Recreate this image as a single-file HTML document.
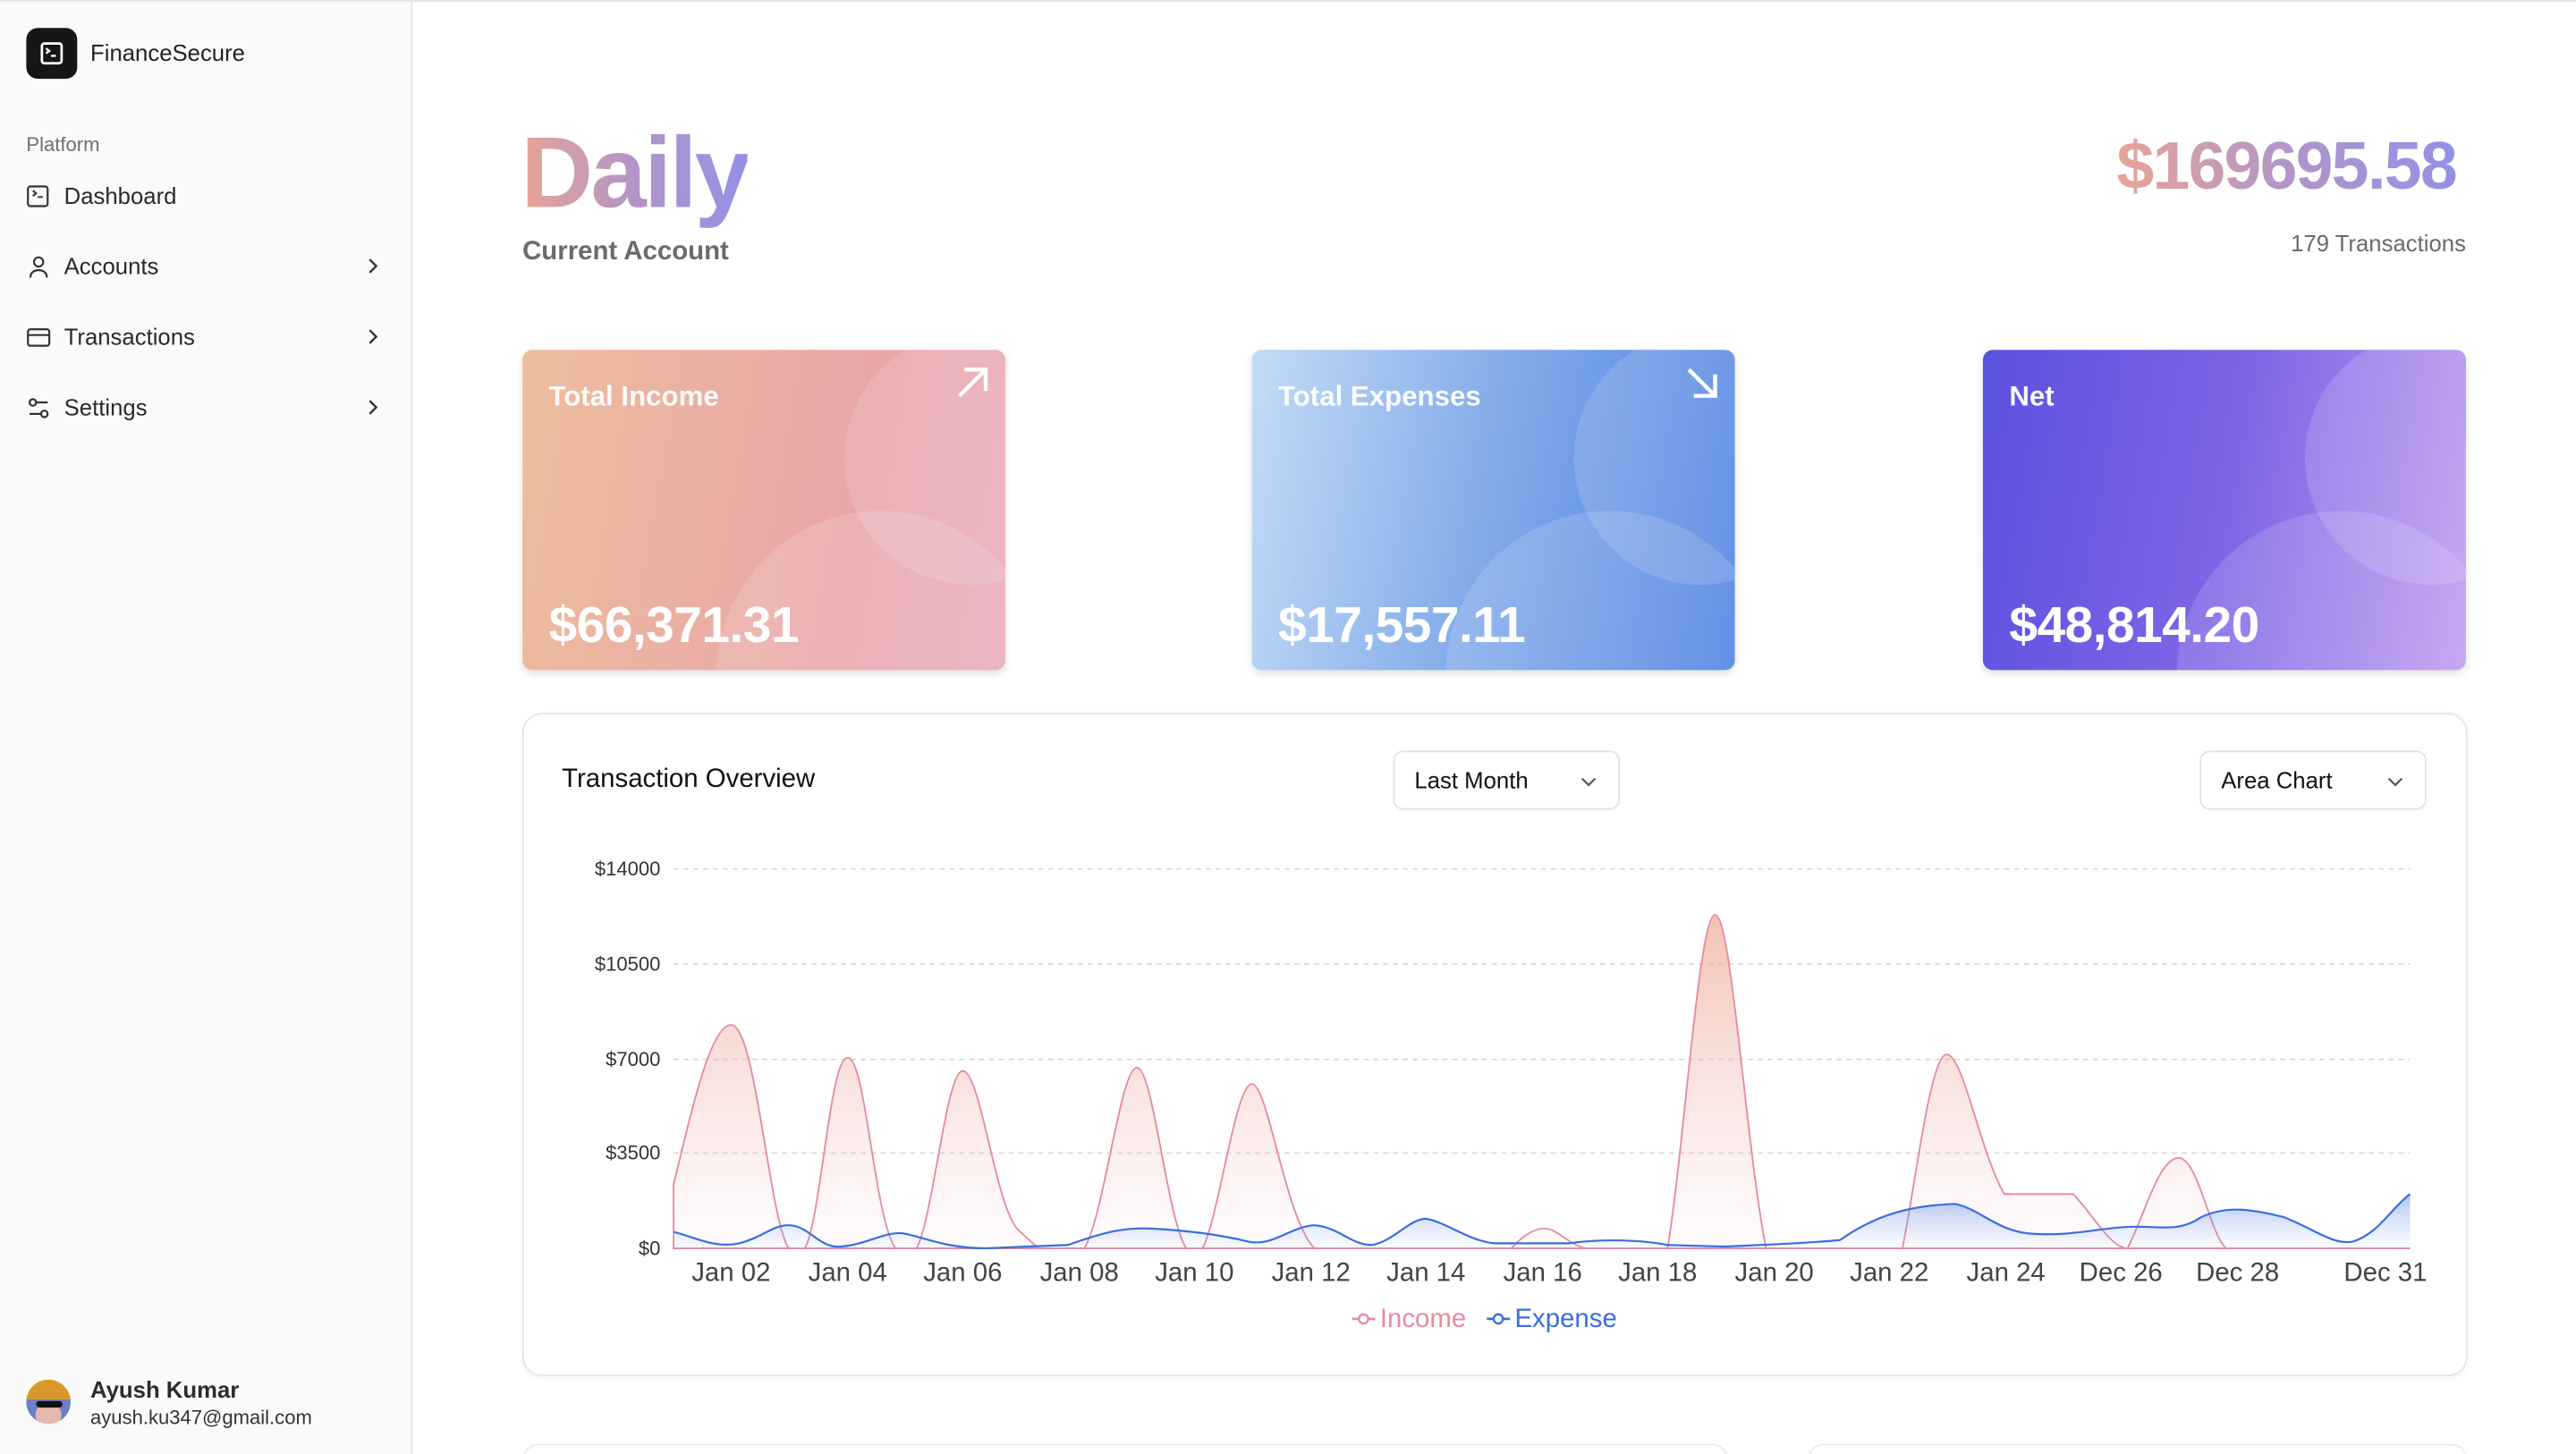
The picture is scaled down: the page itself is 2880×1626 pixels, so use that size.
<!DOCTYPE html>
<html><head><meta charset="utf-8"><style>
*{box-sizing:border-box;margin:0;padding:0}
html,body{width:2880px;height:1626px;overflow:hidden;background:#fff;font-family:"Liberation Sans",sans-serif}
#w{width:1568px;height:885px;transform:scale(1.836735);transform-origin:0 0;position:relative;border-top:1px solid #e4e4e4}
.sb{position:absolute;left:0;top:0;width:251px;height:885px;background:#fafafa;border-right:1px solid #e6e6e6}
.abs{position:absolute}
.nav{position:absolute;left:16px;font-size:14px;color:#2a2a2e;display:flex;align-items:center}
.nav svg{margin-right:8px}
.chev{position:absolute;left:221px}
.card{position:absolute;top:212px;width:294px;height:195px;border-radius:6px;overflow:hidden;box-shadow:0 2px 5px rgba(0,0,0,.12)}
.card .c1{position:absolute;left:196px;top:-11px;width:154px;height:154px;border-radius:50%;background:rgba(255,255,255,.14)}
.card .c2{position:absolute;left:118px;top:98px;width:200px;height:200px;border-radius:50%;background:rgba(255,255,255,.14)}
.card .t{position:absolute;left:16px;top:19px;color:#fff;font-weight:bold;font-size:17px;opacity:.95}
.card .v{position:absolute;left:16px;top:150px;color:#fff;font-weight:bold;font-size:31px;letter-spacing:-.3px}
.card svg{position:absolute;right:9px;top:9px}
.sel{position:absolute;top:456px;height:36px;border:1px solid #e3e3e3;border-radius:6px;font-size:14px;color:#111;padding:9px 12px;background:#fff}
.grad{background:linear-gradient(90deg,#e8a496,#b295c8,#9490e6);-webkit-background-clip:text;background-clip:text;color:transparent}
</style></head><body><div id="w">
<div class="sb">
 <div class="abs" style="left:16px;top:16px;width:31px;height:31px;background:#161616;border-radius:7px"></div>
 <svg class="abs" style="left:24px;top:24px" width="15" height="15" viewBox="0 0 15 15"><rect x="1.5" y="1.5" width="12" height="12" rx="1.5" fill="none" stroke="#fff" stroke-width="1.5"/><path d="M4 4.5l2 1.5-2 1.5M7 9h3" fill="none" stroke="#fff" stroke-width="1.3"/></svg>
 <div class="abs" style="left:55px;top:23px;font-size:14px;color:#222">FinanceSecure</div>
 <div class="abs" style="left:16px;top:80px;font-size:12px;color:#707070">Platform</div>
 <div class="nav" style="top:110px"><svg width="15" height="15" viewBox="0 0 15 15"><rect x="1" y="1.5" width="12" height="12" rx="1.5" fill="none" stroke="#333" stroke-width="1.2"/><path d="M4 4l2 1.7-2 1.7M7 8h3" fill="none" stroke="#333" stroke-width="1.1"/></svg>Dashboard</div>
 <div class="nav" style="top:153px"><svg width="15" height="15" viewBox="0 0 15 15"><circle cx="7.5" cy="4.5" r="2.8" fill="none" stroke="#333" stroke-width="1.2"/><path d="M2.5 14c0-3 2.2-4.5 5-4.5s5 1.5 5 4.5" fill="none" stroke="#333" stroke-width="1.2"/></svg>Accounts</div>
 <div class="nav" style="top:196px"><svg width="15" height="15" viewBox="0 0 15 15"><rect x="1" y="2.5" width="13" height="10" rx="1.5" fill="none" stroke="#333" stroke-width="1.2"/><path d="M1 6h13" stroke="#333" stroke-width="1.2"/></svg>Transactions</div>
 <div class="nav" style="top:239px"><svg width="15" height="15" viewBox="0 0 15 15"><circle cx="4" cy="4" r="2" fill="none" stroke="#333" stroke-width="1.2"/><circle cx="11" cy="11" r="2" fill="none" stroke="#333" stroke-width="1.2"/><path d="M6 4h7M2 11h7" stroke="#333" stroke-width="1.2"/></svg>Settings</div>
 <svg class="chev" style="top:155px" width="12" height="12" viewBox="0 0 12 12"><path d="M4 2l4 4-4 4" fill="none" stroke="#333" stroke-width="1.3"/></svg>
 <svg class="chev" style="top:198px" width="12" height="12" viewBox="0 0 12 12"><path d="M4 2l4 4-4 4" fill="none" stroke="#333" stroke-width="1.3"/></svg>
 <svg class="chev" style="top:241px" width="12" height="12" viewBox="0 0 12 12"><path d="M4 2l4 4-4 4" fill="none" stroke="#333" stroke-width="1.3"/></svg>
 <div class="abs" style="left:16px;top:839px;width:27px;height:27px;border-radius:50%;background:radial-gradient(circle at 50% 80%,#e4b8b0 30%,transparent 32%),linear-gradient(180deg,#d79a2a 0 45%,#6a7fc4 45%)"></div>
 <div class="abs" style="left:22px;top:852px;width:16px;height:4px;background:#111;border-radius:2px"></div>
 <div class="abs" style="left:55px;top:837px;font-size:14px;font-weight:bold;color:#2c2c30">Ayush Kumar</div>
 <div class="abs" style="left:55px;top:855px;font-size:12px;color:#333">ayush.ku347@gmail.com</div>
</div>

<div class="abs grad" style="left:317px;top:68px;font-size:61px;font-weight:bold;letter-spacing:-1.5px;line-height:72px">Daily</div>
<div class="abs" style="left:318px;top:144px;font-size:16px;font-weight:bold;color:#6b6b6b">Current Account</div>
<div class="abs grad" style="right:73px;top:76px;font-size:41px;font-weight:bold;letter-spacing:-1px;line-height:48px">$169695.58</div>
<div class="abs" style="right:67px;top:139px;font-size:14px;color:#6b6b6b">179 Transactions</div>

<div class="card" style="left:318px;background:linear-gradient(100deg,#edbd9c,#e8a6a8 65%,#e8a9b8)"><div class="c1"></div><div class="c2"></div><div class="t">Total Income</div><div class="v">$66,371.31</div><svg width="22" height="22" viewBox="0 0 22 22"><path d="M3 19L19 3M6 3h13v13" fill="none" stroke="#fff" stroke-width="2.4"/></svg></div>
<div class="card" style="left:762px;background:linear-gradient(100deg,#c3dcf6,#87aeea 45%,#4b7fe2)"><div class="c1"></div><div class="c2"></div><div class="t">Total Expenses</div><div class="v">$17,557.11</div><svg width="22" height="22" viewBox="0 0 22 22"><path d="M3 3l16 16M19 6v13H6" fill="none" stroke="#fff" stroke-width="2.4"/></svg></div>
<div class="card" style="left:1207px;background:linear-gradient(100deg,#5a52df,#7f64e6 50%,#bd9af0)"><div class="c1"></div><div class="c2"></div><div class="t">Net</div><div class="v">$48,814.20</div></div>

<div class="abs" style="left:318px;top:433px;width:1184px;height:404px;border:1px solid #e6e6e6;border-radius:12px;box-shadow:0 1px 3px rgba(0,0,0,.05)"></div>
<div class="abs" style="left:342px;top:465px;font-size:16px;color:#111">Transaction Overview</div>
<div class="sel" style="left:848px;width:138px">Last Month<svg class="abs" style="right:12px;top:12px" width="12" height="12" viewBox="0 0 12 12"><path d="M2 4l4 4 4-4" fill="none" stroke="#555" stroke-width="1.2"/></svg></div>
<div class="sel" style="left:1339px;width:138px">Area Chart<svg class="abs" style="right:12px;top:12px" width="12" height="12" viewBox="0 0 12 12"><path d="M2 4l4 4 4-4" fill="none" stroke="#555" stroke-width="1.2"/></svg></div>

<svg class="abs" style="left:0;top:0" width="1568" height="885" viewBox="0 0 1568 885" font-family="Liberation Sans, sans-serif">
<defs>
<linearGradient id="gi" x1="0" y1="0" x2="0" y2="1"><stop offset="0" stop-color="#eea98f" stop-opacity=".7"/><stop offset="1" stop-color="#f3c4cc" stop-opacity=".05"/></linearGradient>
<linearGradient id="ge" x1="0" y1="0" x2="0" y2="1"><stop offset="0" stop-color="#5b8ae6" stop-opacity=".5"/><stop offset="1" stop-color="#9bb8f0" stop-opacity=".05"/></linearGradient>
</defs>
<g stroke="#d8d8d8" stroke-dasharray="3 3" stroke-width="1">
<line x1="410" y1="528" x2="1467" y2="528"/><line x1="410" y1="586" x2="1467" y2="586"/><line x1="410" y1="644" x2="1467" y2="644"/><line x1="410" y1="701" x2="1467" y2="701"/>
</g>
<line x1="410" y1="759" x2="1467" y2="759" stroke="#888"/>
<g font-size="12" fill="#333" text-anchor="end"><text x="402" y="532">$14000</text><text x="402" y="590">$10500</text><text x="402" y="648">$7000</text><text x="402" y="705">$3500</text><text x="402" y="763">$0</text></g>
<path d="M410 759 L410 720 C420 680,432 623,445 623 C460 623,468 740,480 759 L490 759 C500 740,505 643,516 643 C527 643,532 740,545 759 L558 759 C568 740,576 651,586 651 C597 651,606 735,620 748 L632 759 L660 759 C672 740,682 649,692 649 C702 649,710 740,722 759 L732 759 C742 740,752 659,762 659 C772 659,782 740,800 759 L920 759 C928 750,935 747,940 747 C948 747,955 757,965 759 L1015 759 C1025 700,1034 556,1044 556 C1054 556,1063 700,1075 759 L1158 759 C1166 720,1175 641,1185 641 C1195 641,1205 700,1220 726 L1262 726 C1275 740,1285 759,1295 759 C1305 740,1314 704,1326 704 C1338 704,1345 750,1355 759 L1467 759 Z" fill="url(#gi)" stroke="#e58aa0" stroke-width="1"/>
<path d="M410 749 C425 753,435 759,450 756 C465 752,470 745,480 745 C492 745,498 758,510 758 C525 758,540 748,550 750 C562 752,575 759,600 759 L650 757 C665 752,680 746,700 747 C720 748,740 750,760 755 C775 758,785 746,800 745 C815 746,822 757,835 757 C848 755,858 741,868 741 C880 743,895 755,910 756 L955 756 C975 753,1000 754,1015 757 L1050 758 C1070 757,1100 756,1120 754 C1140 740,1160 733,1190 732 C1205 735,1215 748,1235 750 C1260 752,1275 747,1295 746 C1315 745,1325 750,1340 740 C1355 733,1370 735,1390 740 C1410 748,1420 757,1432 755 C1448 750,1455 735,1467 726 L1467 759 L410 759 Z" fill="url(#ge)" stroke="none"/>
<path d="M410 749 C425 753,435 759,450 756 C465 752,470 745,480 745 C492 745,498 758,510 758 C525 758,540 748,550 750 C562 752,575 759,600 759 L650 757 C665 752,680 746,700 747 C720 748,740 750,760 755 C775 758,785 746,800 745 C815 746,822 757,835 757 C848 755,858 741,868 741 C880 743,895 755,910 756 L955 756 C975 753,1000 754,1015 757 L1050 758 C1070 757,1100 756,1120 754 C1140 740,1160 733,1190 732 C1205 735,1215 748,1235 750 C1260 752,1275 747,1295 746 C1315 745,1325 750,1340 740 C1355 733,1370 735,1390 740 C1410 748,1420 757,1432 755 C1448 750,1455 735,1467 726" fill="none" stroke="#3a6ee0" stroke-width="1.2"/>
<g font-size="16" fill="#444" text-anchor="middle"><text x="445" y="779">Jan 02</text><text x="516" y="779">Jan 04</text><text x="586" y="779">Jan 06</text><text x="657" y="779">Jan 08</text><text x="727" y="779">Jan 10</text><text x="798" y="779">Jan 12</text><text x="868" y="779">Jan 14</text><text x="939" y="779">Jan 16</text><text x="1009" y="779">Jan 18</text><text x="1080" y="779">Jan 20</text><text x="1150" y="779">Jan 22</text><text x="1221" y="779">Jan 24</text><text x="1291" y="779">Dec 26</text><text x="1362" y="779">Dec 28</text><text x="1452" y="779">Dec 31</text></g>
<g font-size="16"><line x1="823" y1="802" x2="837" y2="802" stroke="#e58aa0" stroke-width="1.5"/><circle cx="830" cy="802" r="2.8" fill="#fff" stroke="#e58aa0" stroke-width="1.3"/><text x="840" y="807" fill="#e58aa0">Income</text>
<line x1="905" y1="802" x2="919" y2="802" stroke="#3a6ee0" stroke-width="1.5"/><circle cx="912" cy="802" r="2.8" fill="#fff" stroke="#3a6ee0" stroke-width="1.3"/><text x="922" y="807" fill="#3a6ee0">Expense</text></g>
</svg>
<div class="abs" style="left:318px;top:878px;width:734px;height:20px;border:1px solid #ececec;border-radius:12px"></div>
<div class="abs" style="left:1100px;top:878px;width:402px;height:20px;border:1px solid #ececec;border-radius:12px"></div>
</div></body></html>
